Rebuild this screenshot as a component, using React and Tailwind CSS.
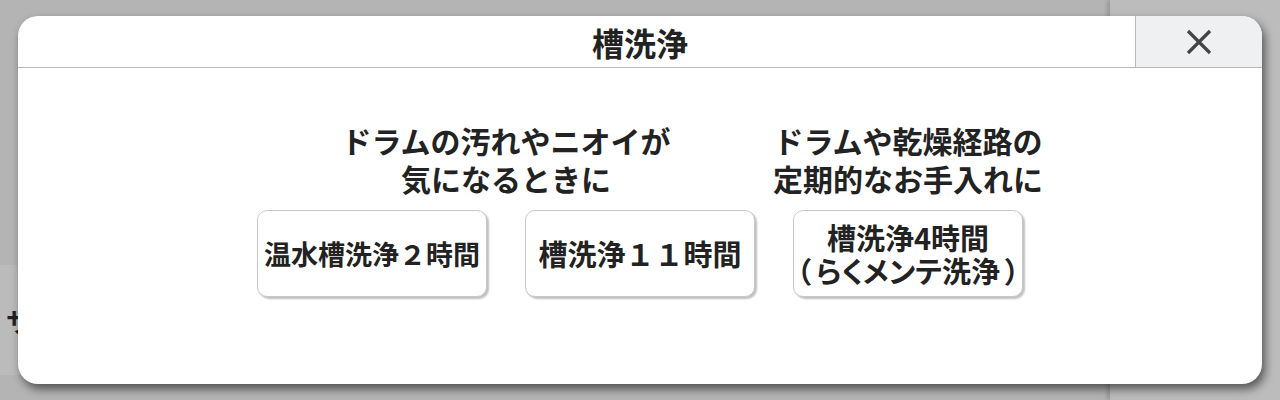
import React from 'react';

const jp = { fontFamily: '"Noto Sans CJK JP", "Noto Sans", sans-serif' };

const Option = ({ className = 'text-[29px]', children }) => (
  <button className={`w-[230px] h-[87px] rounded-[10px] border border-[#c8c8c8] bg-white shadow-[2px_2px_2px_rgba(0,0,0,0.25)] flex flex-col items-center justify-center whitespace-nowrap leading-[33px] font-bold text-[#222] ${className}`}>
    {children}
  </button>
);

const Group = ({ caption, children }) => (
  <div className="flex flex-col items-center">
    <div className="text-[30px] leading-[38px] font-semibold text-[#222] text-center whitespace-nowrap">{caption}</div>
    <div className="mt-[13px] flex gap-[38px]">{children}</div>
  </div>
);

export default function App() {
  return (
    <div className="relative w-[1280px] h-[400px] overflow-hidden flex bg-[#b4b4b4]" style={jp}>
      {/* page behind the dialog */}
      <div className="w-[1110px] h-full flex flex-col">
        <div className="flex-1" />
        <div className="h-[110px] mb-[25px] w-[60px] bg-[#bbbbbb] flex items-center pl-[6px] text-[26px] font-bold text-[#222]">サ</div>
      </div>
      <div className="flex-1 h-full bg-[#bcbcbc] shadow-[-3px_0_4px_rgba(0,0,0,0.15)]" />

      {/* dialog */}
      <div className="absolute left-[18px] top-[16px] w-[1244px] h-[368px] bg-white rounded-[20px] shadow-[3px_5px_10px_rgba(0,0,0,0.55)] flex flex-col overflow-hidden">
        <div className="h-[52px] flex border-b border-[#b8b8b8]">
          <div className="flex-1 flex items-center justify-center pl-[127px] text-[32px] font-bold text-[#222]">槽洗浄</div>
          <button className="w-[127px] h-full bg-[#eff0f2] border-l border-[#b8b8b8] flex items-center justify-center">
            <svg width="28" height="28" viewBox="0 0 28 28">
              <path d="M3 3 L25 25 M25 3 L3 25" stroke="#444" strokeWidth="3.2" fill="none" />
            </svg>
          </button>
        </div>
        <div className="flex items-start gap-[18px] pt-[53px] pl-[239px]">
          <Group caption={<>ドラムの汚れやニオイが<br />気になるときに</>}>
            <Option className="text-[27px]">温水槽洗浄２時間</Option>
            <Option>槽洗浄１１時間</Option>
          </Group>
          <Group caption={<>ドラムや乾燥経路の<br />定期的なお手入れに</>}>
            <Option>
              <span>槽洗浄4時間</span>
              <span className="flex [font-feature-settings:'palt']">
                <span className="mr-[5px]">（</span>らくメンテ洗浄<span className="ml-[5px]">）</span>
              </span>
            </Option>
          </Group>
        </div>
      </div>
    </div>
  );
}
